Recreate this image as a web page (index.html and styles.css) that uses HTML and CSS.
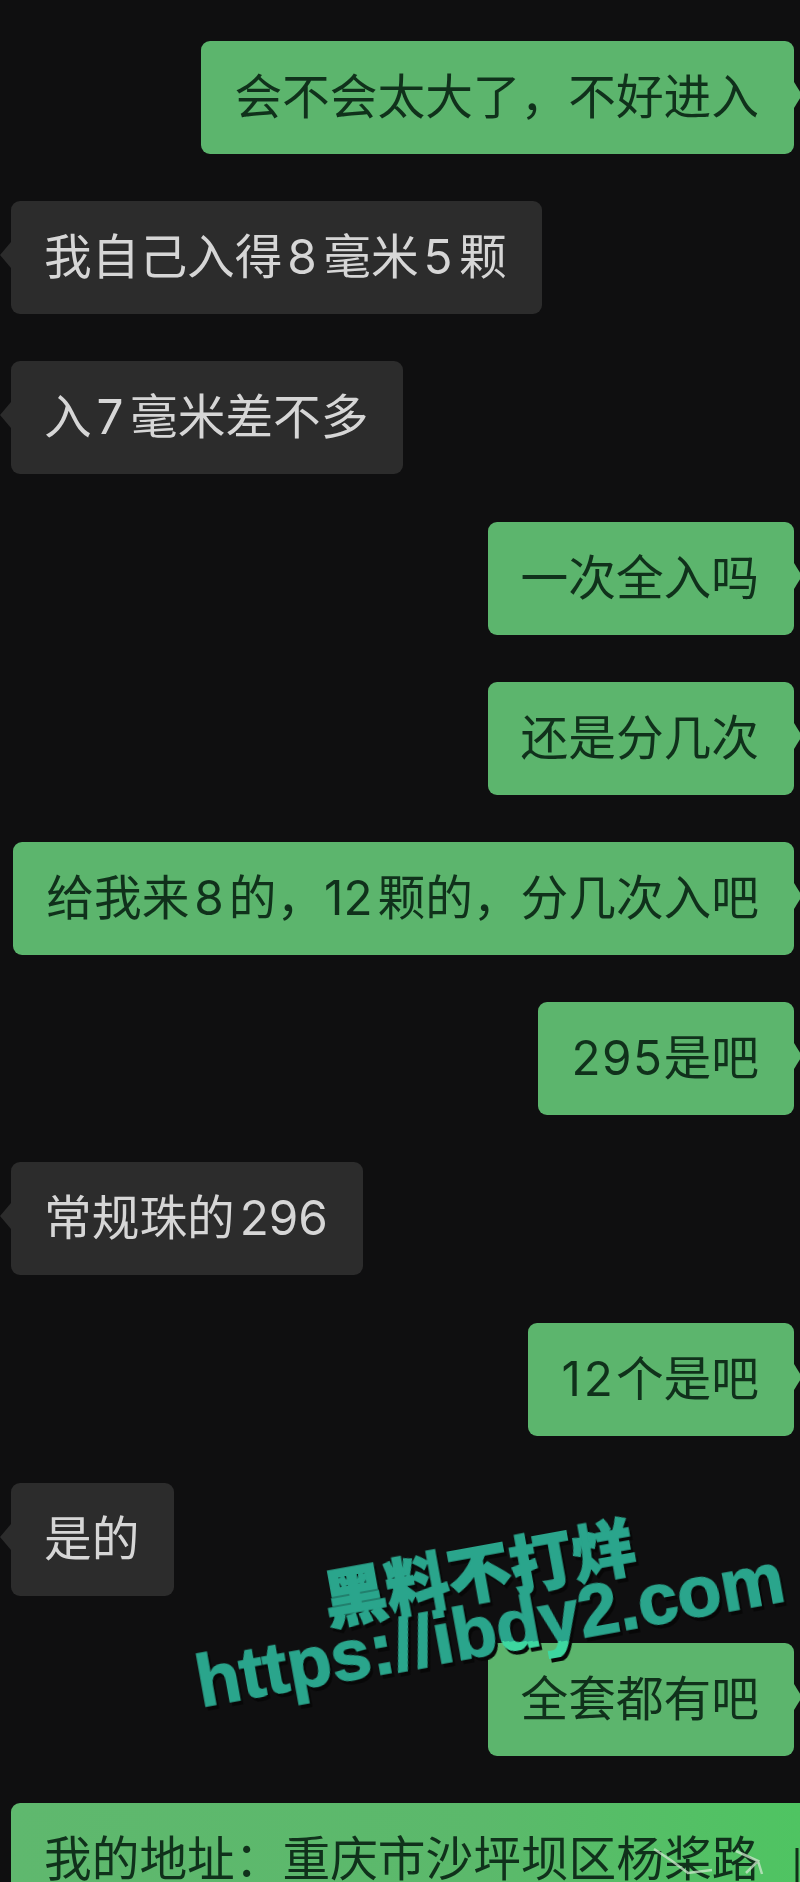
FILE: index.html
```html
<!DOCTYPE html>
<html lang="zh-CN">
<head>
    <meta charset="UTF-8">
    <meta name="viewport" content="width=device-width, initial-scale=1.0">
    <title>聊天记录</title>
    <link rel="stylesheet" href="styles.css">
</head>
<body>

    <div class="chat">
        <div class="msg me">会不会太大了，不好进入</div>
        <div class="msg other">我自己入得 <span class="num">8</span> 毫米 <span class="num">5</span> 颗</div>
        <div class="msg other">入 <span class="num">7</span> 毫米差不多</div>
        <div class="msg me">一次全入吗</div>
        <div class="msg me">还是分几次</div>
        <div class="msg me">给我来 8 的，12 颗的，分几次入吧</div>
        <div class="msg me"><span class="num">295</span>是吧</div>
        <div class="msg other">常规珠的 296</div>
        <div class="msg me"><span class="num wide">12</span>个是吧</div>
        <div class="msg other">是的</div>
        <div class="msg me">全套都有吧</div>
        <div class="msg me last">
            我的地址：重庆市沙坪坝区杨桨路
            <svg class="scratch" width="150" height="40" viewBox="0 0 150 40" fill="none">
                <path d="M4 6 L22 18 L38 30 L62 27 M86 8 L108 18 L96 30 M108 18 L112 31" stroke="#cfe8cf" stroke-width="2.5" stroke-opacity="0.75"/>
                <path d="M147 5 V39" stroke="#123018" stroke-width="3"/>
            </svg>
        </div>
    </div>

    <div class="watermark">
        <div class="wm-title">黑料不打烊</div>
        <div class="wm-url">https://ib<span class="wm-over">dy2</span>.com</div>
    </div>

</body>
</html>
```

FILE: styles.css
```css
html, body {
    margin: 0;
    padding: 0;
}

body {
    position: relative;
    height: 1882px;
    overflow: hidden;
    background-color: #0f0f10;
    font-family: Inter, "Noto Sans CJK SC", sans-serif;
}

.chat {
    display: flex;
    flex-direction: column;
    gap: 47.2px;
    padding: 41px 6px 0 11px;
    filter: blur(0.6px);
}

.msg {
    position: relative;
    box-sizing: border-box;
    height: 113px;
    line-height: 113px;
    padding: 0 35px 0 33px;
    border-radius: 9px;
    font-size: 47.7px;
    word-spacing: -8.5px;
    white-space: nowrap;
}

.num {
    letter-spacing: 1.5px;
}

.wide {
    letter-spacing: 3px;
}

.me {
    align-self: flex-end;
    background-color: #5cb56d;
    color: #10311b;
}

.other {
    align-self: flex-start;
    background-color: #2c2c2c;
    color: #d6d6d6;
}

.me::after,
.other::after {
    content: "";
    position: absolute;
    top: 41px;
    border-top: 13px solid transparent;
    border-bottom: 13px solid transparent;
}

.me::after {
    right: -8px;
    border-left: 8px solid #5cb56d;
}

.other::after {
    left: -11px;
    border-right: 11px solid #2c2c2c;
}

.last {
    align-self: stretch;
    margin-right: -6px;
    height: 79px;
    padding-top: 33px;
    line-height: 46px;
    border-radius: 9px 0 0 0;
    background: linear-gradient(90deg, #5fb86e 0%, #5bb96b 60%, #4fc462 100%);
}

.last::after {
    display: none;
}

.scratch {
    position: absolute;
    right: 0;
    top: 40px;
}

.watermark {
    position: absolute;
    left: 202px;
    top: 1590px;
    width: 600px;
    transform: rotate(-10.3deg);
    transform-origin: left bottom;
    color: #2aa58c;
    font-weight: 900;
    white-space: nowrap;
    -webkit-text-stroke: 1.5px #2aa58c;
    filter: drop-shadow(2px 4px 0 #070707) blur(0.4px);
}

.wm-title {
    padding-left: 140px;
    font-family: "Noto Sans CJK SC", sans-serif;
    font-size: 63px;
    line-height: 62px;
}

.wm-url {
    font-family: "Liberation Sans", sans-serif;
    font-weight: 700;
    font-size: 72px;
    line-height: 60px;
}

/* the part of the url that sits on the green bubble is brighter */
.wm-over {
    background: linear-gradient(190deg, #2aa58c 74%, #3dd7a0 74%);
    -webkit-background-clip: text;
    background-clip: text;
    color: transparent;
    -webkit-text-stroke: 1.5px transparent;
}
```
